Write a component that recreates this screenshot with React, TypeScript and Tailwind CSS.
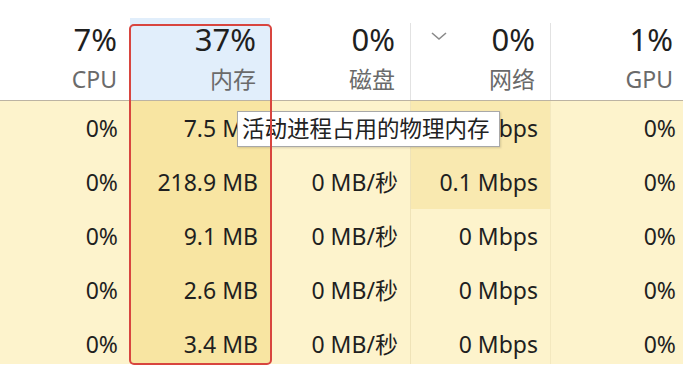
import { ReactNode } from 'react';

const COLS = [
  { key: 'cpu', value: '7%', label: 'CPU', w: 'w-[130px]', hpr: 'pr-[13px]', bpr: 'pr-[12px]' },
  { key: 'mem', value: '37%', label: '内存', w: 'w-[140px]', hpr: 'pr-[14px]', bpr: 'pr-[12px]' },
  { key: 'disk', value: '0%', label: '磁盘', w: 'w-[140px]', hpr: 'pr-[15px]', bpr: 'pr-[12px]' },
  { key: 'net', value: '0%', label: '网络', w: 'w-[140px]', hpr: 'pr-[15px]', bpr: 'pr-[12px]' },
  { key: 'gpu', value: '1%', label: 'GPU', w: 'w-[133px]', hpr: 'pr-[10px]', bpr: 'pr-[7px]' },
];

const ROWS = [
  ['0%', '7.5 MB', '0 MB/秒', '0 Mbps', '0%'],
  ['0%', '218.9 MB', '0 MB/秒', '0.1 Mbps', '0%'],
  ['0%', '9.1 MB', '0 MB/秒', '0 Mbps', '0%'],
  ['0%', '2.6 MB', '0 MB/秒', '0 Mbps', '0%'],
  ['0%', '3.4 MB', '0 MB/秒', '0 Mbps', '0%'],
];

function HeaderCell({ i, children }: { i: number; children: ReactNode }) {
  const c = COLS[i];
  const mem = c.key === 'mem';
  const divided = c.key === 'net' || c.key === 'gpu';
  return (
    <div className={`${c.w} ${c.hpr} relative flex flex-col items-end pt-[19px]`}>
      {mem && <div className="absolute inset-x-0 top-[18px] bottom-0 bg-[#e1eefb]" />}
      {divided && <div className="absolute left-0 top-[23px] bottom-0 w-px bg-[#e2e2e2]" />}
      {children}
    </div>
  );
}

export default function App() {
  return (
    <div
      className="relative w-[683px] h-[368px] overflow-hidden bg-white text-[#1f1f1f]"
      style={{ fontFamily: '"Noto Sans", "Noto Sans CJK SC", sans-serif' }}
    >
      {/* header */}
      <div className="flex h-[101px] border-b border-[#bcb3a3]">
        {COLS.map((c, i) => (
          <HeaderCell key={c.key} i={i}>
            <div className="relative text-[31px] leading-[40px]">{c.value}</div>
            <div className="relative mt-[5px] text-[23px] leading-[30px] text-[#6a6a6a]">{c.label}</div>
            {c.key === 'net' && (
              <svg
                className="absolute left-[20px] top-[30px]"
                width="18"
                height="12"
                viewBox="0 0 18 12"
                fill="none"
                stroke="#8a8a8a"
                strokeWidth="1.6"
              >
                <polyline points="2,3 9,9 16,3" />
              </svg>
            )}
          </HeaderCell>
        ))}
      </div>

      {/* body */}
      <div className="flex flex-col h-[263px] overflow-hidden bg-[#fdf3cc]">
        {ROWS.map((row, r) => (
          <div key={r} className="flex h-[54px] shrink-0">
            {row.map((cell, i) => {
              const c = COLS[i];
              let bg = '';
              if (c.key === 'mem') bg = 'bg-[#f8e5a2]';
              if (c.key === 'net') bg = r < 2 ? 'bg-[#f9e9b0] border-l border-[#efe3b8]' : 'border-l border-[#efe3b8]';
              if (c.key === 'gpu') bg = 'border-l border-[#f3e8bf]';
              return (
                <div
                  key={i}
                  className={`${c.w} ${c.bpr} ${bg} text-right text-[23px] leading-[54px] whitespace-nowrap`}
                >
                  {cell}
                </div>
              );
            })}
          </div>
        ))}
      </div>

      {/* tooltip */}
      <div className="absolute left-[237px] top-[111px] h-[36px] w-[263px] border border-[#a8a8a8] bg-white pl-[4px] text-[22.5px] leading-[33px] text-[#222] shadow-[1px_1px_2px_rgba(0,0,0,0.15)] whitespace-nowrap">
        活动进程占用的物理内存
      </div>

      {/* highlight frame */}
      <div className="absolute left-[129px] top-[24px] h-[341px] w-[143px] rounded-[5px] border-2 border-[#d8453f]" />
    </div>
  );
}
